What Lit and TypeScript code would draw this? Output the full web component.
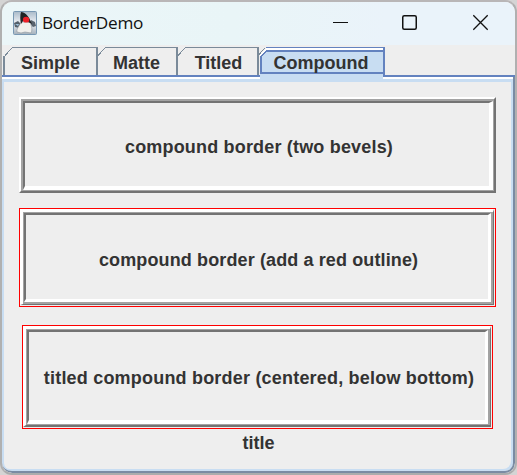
import { LitElement, html, css, svg } from "lit";
import { customElement, property } from "lit/decorators.js";

@customElement("bevel-box")
class BevelBox extends LitElement {
  @property({ type: Boolean, reflect: true }) outlined = false;
  @property({ type: Boolean, reflect: true }) titled = false;
  static styles = css`
    :host { display: block; box-sizing: border-box; }
    :host([outlined]) { border: 1px solid #f00; padding: 0 1px 1px 0; }
    .b { box-sizing: border-box; border: 2px solid; height: 100%; }
    .w { border-color: #fff #737373 #737373 #fff; }
    .x { border-width: 2px 1px 1px 2px; border-color: #a3a3a3; }
    .y { border-width: 2px 4px 4px 2px; border-color: #737373 #fff #fff #737373;
      display: flex; align-items: center; justify-content: center; white-space: nowrap; }
    .label { position: relative; top: 3px; left: 2px; letter-spacing: .18px; }
    :host([outlined]) .w { border-width: 3px 1px 1px 3px; }
    :host([outlined]) .x { border-width: 1px 2px 2px 1px; }
    :host([outlined]) .y { border-width: 2px 3px 3px 2px; }
    :host([outlined]) .label { left: 1.6px; letter-spacing: .12px; }
    :host([titled]) .w { border-bottom-width: 2px; }
    :host([titled]) .x { border-bottom-width: 1px; }
    :host([titled]) .y { border-bottom-width: 4px; }
    :host([titled]) .label { top: 2px; left: 2px; letter-spacing: .2px; }
  `;
  render() {
    return html`<div class="b w"><div class="b x"><div class="b y"><span class="label"><slot></slot></span></div></div></div>`;
  }
}

@customElement("app-root")
class AppRoot extends LitElement {
  static styles = css`
    :host { display: block; width: 517px; height: 475px; background: #d4d4d4; overflow: hidden;
      font: bold 18px "Liberation Sans", Arial, sans-serif; color: #333; }
    .window { box-sizing: border-box; width: 517px; height: 475px; border: 2px solid #b0b0b0;
      border-top-color: #b9b6b7; border-bottom-color: #aaacad; border-radius: 12px; overflow: hidden;
      background: #eee; display: flex; flex-direction: column; }
    .bar { height: 43px; flex: none; background: linear-gradient(90deg, #ebf6f8, #e9f5f7 45%, #eaf3fa 75%);
      display: flex; align-items: center; color: #111; font: 17.2px "Open Sans", "Noto Sans", sans-serif; }
    .logo { width: 24px; height: 24px; margin: 0 5px 2px 11px; }
    .name { flex: 1; letter-spacing: -.3px; padding-bottom: 3px; }
    .controls { width: 182px; height: 43px; }
    .tabs { height: 30px; flex: none; display: flex; position: relative; }
    .lines { position: absolute; left: 0; top: 0; }
    .tab { position: relative; padding-top: 8px; line-height: 20px; text-align: center; }
    .body { flex: 1; box-sizing: border-box; border: solid #7a8ba3; border-width: 0 2px 2px 0;
      box-shadow: inset 2px 0 #c8ddf2, inset -2px -2px #c8ddf2; border-radius: 0 0 10px 10px;
      display: flex; flex-direction: column; padding: 22px 0 0 17px; }
    .one { width: 477px; height: 96px; margin-bottom: 15px; }
    .two { width: 477px; height: 99px; margin-bottom: 18px; }
    .three { width: 471px; height: 104px; margin-left: 3px; }
    .title { margin-left: 4px; width: 471px; line-height: 20px; padding-top: 4px; text-align: center; }
  `;

  private logo = svg`
    <rect x=".5" y=".5" width="23" height="23" rx="1" fill="url(#g)" stroke="#7898b3"/>
    <path d="M1 12 5 10 8 13 6 17 2 16Z" fill="#54606b"/>
    <path d="M2 13 6 13 5 15Z" fill="#9ec3dc"/>
    <path d="M18 9 22 11 23 15 20 16 18 14Z" fill="#59636d"/>
    <path d="M8 11C7 14 3 18 4 21L8 22 12 21 18 22C20 18 18 14 17 11Z" fill="#f0f0ed" stroke="#8c949b" stroke-width=".6"/>
    <path d="M8 1C12 1 16 5 19 13L15 11 10 10 8 13C7 9 7 4 8 1Z" fill="#202426"/>
    <ellipse cx="13.1" cy="8.7" rx="3.2" ry="2.9" fill="#ec2029"/>`;

  render() {
    return html`
      <div class="window">
        <div class="bar">
          <svg class="logo" viewBox="0 0 24 24"><defs><linearGradient id="g" x2="0" y2="1"><stop stop-color="#a9bac9"/><stop offset=".5" stop-color="#eef1f5"/><stop offset="1" stop-color="#a4b0bb"/></linearGradient></defs>${this.logo}</svg>
          <span class="name">BorderDemo</span>
          <svg class="controls" viewBox="333 2 182 43" fill="none" stroke="#111">
            <path d="M333 22.5H348" shape-rendering="crispEdges"/>
            <rect x="402.75" y="15.75" width="13.5" height="13.5" rx="1.5" stroke-width="1.5"/>
            <path d="M473.3 15.3 487.7 29.7M487.7 15.3 473.3 29.7" stroke-width="1.3"/>
          </svg>
        </div>
        <div class="tabs">
          <svg class="lines" width="513" height="37" viewBox="2 45 513 37" shape-rendering="crispEdges">
            <path d="M2 75H260V79H2ZM383 75H513V79H383Z" fill="#fff"/>
            <path d="M2 79H260V77H383V79H513V82H2Z" fill="#c8ddf2"/>
            <path d="M260 55 266 48H384V77H260Z" fill="#fff"/>
            <path d="M262 56 267 51H383V79H260V74H262Z" fill="#c8ddf2"/>
            <path d="M12 47H98V75H96V48H12ZM105 47H178V75H176V48H105ZM185 47H259V75H257V48H185ZM3 56H5V75H3ZM96 47H98V56H96Z" fill="#7a8a99"/>
            <path d="M5 55.5 12 48M98 55.5 105 48M178 55.5 185 48M259 54.5 265 48" stroke="#7a8a99"/>
            <path d="M2 75H260V77H2ZM383 75H515V77H383ZM266 47H385V77H383V52H267V50H383V48H266ZM260 56H262V72H383V74H260Z" fill="#6382bf"/>
            <path d="M261 56.5 267 51" stroke="#6382bf" stroke-width="1.5"/>
          </svg>
          ${["Simple", "Matte", "Titled", "Compound"].map((t, i) => html`<div class="tab" style="width:${[97, 75, 89, 116][i]}px">${t}</div>`)}
        </div>
        <div class="body">
          <bevel-box class="one">compound border (two bevels)</bevel-box>
          <bevel-box class="two" outlined>compound border (add a red outline)</bevel-box>
          <bevel-box class="three" outlined titled>titled compound border (centered, below bottom)</bevel-box>
          <div class="title">title</div>
        </div>
      </div>`;
  }
}
